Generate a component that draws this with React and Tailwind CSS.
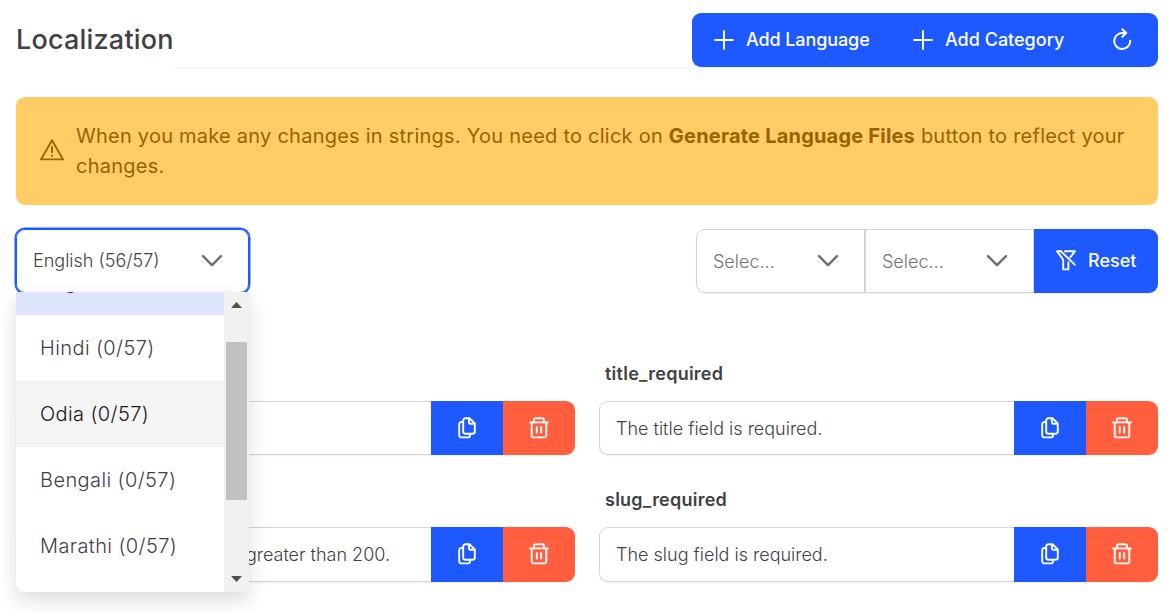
const stroke = {
  fill: 'none',
  stroke: 'currentColor',
  strokeLinecap: 'round',
  strokeLinejoin: 'round',
};

function PlusIcon() {
  return (
    <svg width="20" height="20" viewBox="0 0 20 20" {...stroke} strokeWidth="1.9">
      <path d="M10 1v18M1 10h18" />
    </svg>
  );
}

function RefreshIcon() {
  return (
    <svg width="20" height="22" viewBox="0 0 20 22" {...stroke} strokeWidth="2">
      <path d="M18.2 12.8a8 8 0 1 1-8-7.8h3.6" />
      <path d="M10.3 1.3l3.9 3.7-3.9 3.8" />
    </svg>
  );
}

function WarningIcon() {
  return (
    <svg width="24" height="22" viewBox="0 0 24 22" {...stroke} strokeWidth="1.9">
      <path d="M12 1.2 23 20.4H1z" />
      <path d="M12 8v5.2M12 16.4v.5" />
    </svg>
  );
}

function ChevronIcon() {
  return (
    <svg width="22" height="14" viewBox="0 0 22 14" {...stroke} strokeWidth="2.6">
      <path d="M2 2.2l9 9 9-9" />
    </svg>
  );
}

function FilterSlashIcon() {
  return (
    <svg width="20" height="21" viewBox="0 0 20 21" {...stroke} strokeWidth="1.9">
      <path d="M4.8 1.2H1l6.2 8.6v9.6h5.2v-7.2" />
      <path d="M4.8 1.2l14 13.4" />
      <path d="M9 1.2h10l-4.6 6" />
    </svg>
  );
}

function CopyIcon() {
  return (
    <svg width="18" height="22" viewBox="0 0 18 22" {...stroke} strokeWidth="1.9">
      <path d="M4.6 5H3.4A2.2 2.2 0 0 0 1.2 7.2v11a2.2 2.2 0 0 0 2.2 2.2h6.4a2.2 2.2 0 0 0 2.2-2.2v-1.4" />
      <path d="M7.4 1.2h4l5.4 5.2v8.2a2.2 2.2 0 0 1-2.2 2.2H7.4a2.2 2.2 0 0 1-2.2-2.2V3.4a2.2 2.2 0 0 1 2.2-2.2z" />
      <path d="M10.9 1.6v3.9a1.2 1.2 0 0 0 1.2 1.2h4" />
    </svg>
  );
}

function TrashIcon() {
  return (
    <svg width="20" height="22" viewBox="0 0 20 22" {...stroke} strokeWidth="1.9">
      <path d="M1 5.4h18M2.7 5.4v13.2a1.8 1.8 0 0 0 1.8 1.8h11a1.8 1.8 0 0 0 1.8-1.8V5.4" />
      <path d="M5 5.4V3a1.8 1.8 0 0 1 1.8-1.8h6.4A1.8 1.8 0 0 1 15 3v2.4" />
      <path d="M7.8 10v5.6M12.2 10v5.6" />
    </svg>
  );
}

function Filter({ className }) {
  return (
    <div className={`flex h-16 items-center justify-between border border-[#d4d4d8] pl-4 pr-[25px] text-[18px] font-light text-[#71717a] ${className}`}>
      <span>Selec...</span>
      <ChevronIcon />
    </div>
  );
}

function Field({ label, value, height, alignEnd }) {
  return (
    <div>
      <div className="h-7 pl-1.5 text-[18px] leading-7 font-semibold tracking-[0.24px] text-[#3f3f46]">{label}</div>
      <div className={`mt-[13px] flex rounded-[9px] shadow-[0_1px_2px_rgba(0,0,0,0.06)] ${height}`}>
        <div className={`flex flex-1 items-center rounded-l-[9px] border border-r-0 border-[#d4d4d8] bg-white text-[18px] font-light text-[#3f3f46] ${alignEnd ? 'justify-end pr-[41px]' : 'pl-4'}`}>
          {value}
        </div>
        <button className="flex w-[72px] items-center justify-center bg-[#1d59ff] pb-px text-white">
          <CopyIcon />
        </button>
        <button className="flex w-[72px] items-center justify-center rounded-r-[9px] bg-[#ff5f3f] pb-px text-white">
          <TrashIcon />
        </button>
      </div>
    </div>
  );
}

function LanguageMenu() {
  return (
    <div className="absolute top-[63px] left-0 z-10 flex h-[300px] w-[233px] overflow-hidden rounded-bl-[9px] bg-white shadow-[0_8px_20px_rgba(0,0,0,0.14)]">
      <div className="flex flex-1 flex-col justify-start overflow-hidden text-[20px] font-light tracking-[0.4px] text-[#3f3f46]">
        <div className="flex h-[23px] shrink-0 flex-col justify-end overflow-hidden bg-[#e0e5ff]">
          <div className="flex h-[66px] shrink-0 items-center px-6 text-[#312e81]">English (56/57)</div>
        </div>
        <div className="flex h-[66px] shrink-0 items-center px-6">Hindi (0/57)</div>
        <div className="flex h-[66px] shrink-0 items-center bg-[#f4f4f4] px-6 text-[#18181b]">Odia (0/57)</div>
        <div className="flex h-[66px] shrink-0 items-center px-6">Bengali (0/57)</div>
        <div className="flex h-[66px] shrink-0 items-center px-6">Marathi (0/57)</div>
      </div>
      <div className="flex w-[25px] flex-col items-center bg-[#f1f1f1] pr-px">
        <svg className="mt-[10px]" width="11" height="6" viewBox="0 0 11 6">
          <path d="M0 6 5.5 0 11 6z" fill="#505050" />
        </svg>
        <div className="mt-[34px] h-[158px] w-[21px] bg-[#c1c1c1]" />
        <svg className="mt-auto mb-[10px]" width="11" height="6" viewBox="0 0 11 6">
          <path d="M0 0 5.5 6 11 0z" fill="#505050" />
        </svg>
      </div>
    </div>
  );
}

export default function App() {
  return (
    <div className="h-[612px] overflow-hidden bg-white px-4 pt-[13px] font-['Inter',sans-serif]">
      <header className="flex h-[54px]">
        <h1 className="flex w-[158px] shrink-0 items-center text-[27px] font-medium tracking-[0.2px] whitespace-nowrap text-[#3f3f46]">Localization</h1>
        <div className="flex flex-1 justify-end rounded-r-[9px] shadow-[0_1px_2px_rgba(0,0,0,0.05)]">
          <div className="flex overflow-hidden rounded-[9px] bg-[#1d59ff] text-[18px] font-medium tracking-[-0.1px] text-white">
            <button className="flex w-[199px] items-center gap-3 pl-[22px] whitespace-nowrap"><PlusIcon /><span className="pb-px">Add Language</span></button>
            <button className="flex w-[195px] items-center gap-3 pl-[22px] whitespace-nowrap"><PlusIcon /><span className="pb-px tracking-normal">Add Category</span></button>
            <button className="flex w-[72px] items-center justify-center pb-0.5"><RefreshIcon /></button>
          </div>
        </div>
      </header>

      <div className="mt-[30px] flex h-[108px] items-center rounded-[9px] bg-[#ffcc66] pr-4 pl-6 text-[#996300]">
        <span className="pb-[3px]"><WarningIcon /></span>
        <p className="ml-3 flex-1 text-[20px] leading-[30px] tracking-[0.24px]">
          When you make any changes in strings. You need to click on <b className="font-bold tracking-[0.2px]">Generate Language Files</b> button to reflect your changes.
        </p>
      </div>

      <div className="mt-6 flex h-16 justify-between">
        <div className="relative w-[233px]">
          <div className="flex h-16 items-center justify-between rounded-[9px] border border-[#1d59ff] pr-[25px] pl-4 text-[18px] font-light text-[#3f3f46] shadow-[0_0_0_1.5px_#1d59ff]">
            <span className="pb-px">English (56/57)</span>
            <span className="text-[#71717a]"><ChevronIcon /></span>
          </div>
          <LanguageMenu />
        </div>
        <div className="flex w-[462px] rounded-[9px] shadow-[0_1px_2px_rgba(0,0,0,0.06)]">
          <Filter className="w-[169px] rounded-l-[9px]" />
          <Filter className="w-[169px]" />
          <button className="flex flex-1 items-center gap-3 rounded-r-[9px] bg-[#1d59ff] pb-px pl-[22px] text-[18px] font-medium text-white">
            <FilterSlashIcon />Reset
          </button>
        </div>
      </div>

      <div className="mt-[67px] grid grid-cols-[559px_559px] gap-x-6 gap-y-[31px]">
        <Field label="" value="" height="h-[54px]" />
        <Field label="title_required" value="The title field is required." height="h-[54px]" />
        <Field label="" value="greater than 200." height="h-[55px]" alignEnd />
        <Field label="slug_required" value="The slug field is required." height="h-[55px]" />
      </div>
    </div>
  );
}
